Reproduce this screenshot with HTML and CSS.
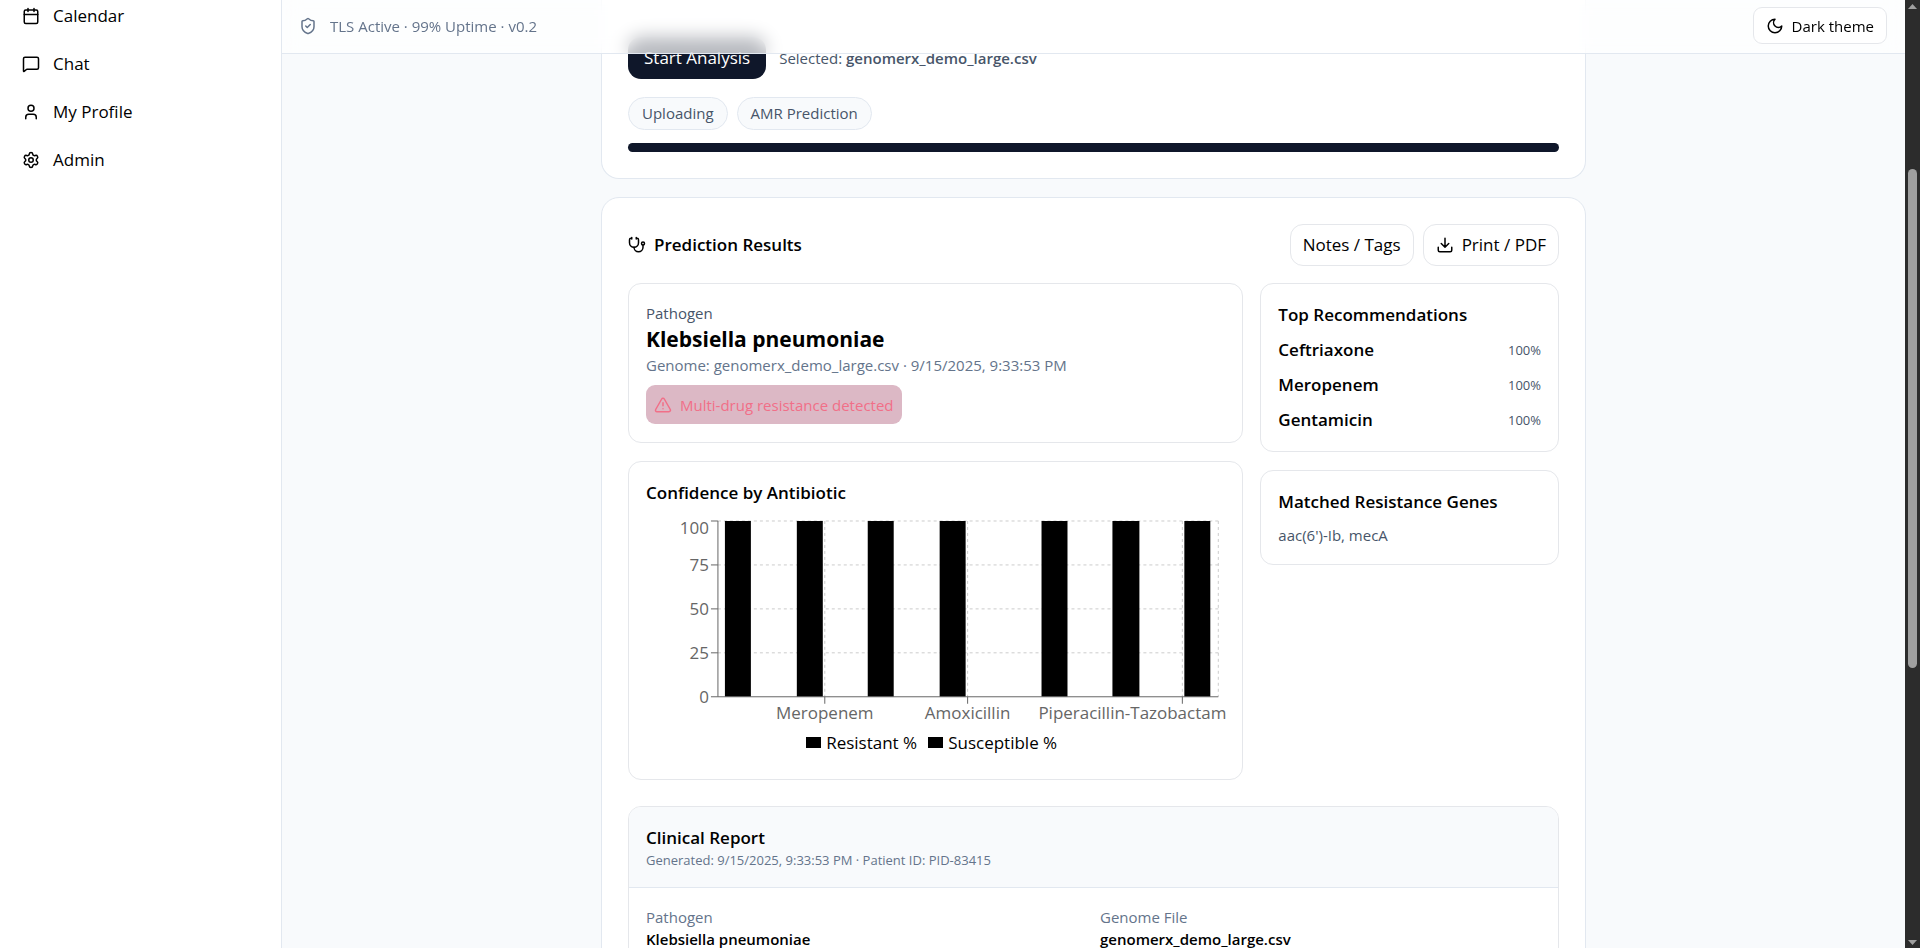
FILE: index.html
```html
<!DOCTYPE html>
<html lang="en">
<head>
<meta charset="utf-8">
<title>GenomeRx</title>
<link rel="stylesheet" href="styles.css">
</head>
<body>
<div class="app">
  <aside class="sidebar">
    <nav class="nav">
      <a class="nav-link" href="#calendar"><svg class="icon" viewBox="0 0 24 24"><path d="M8 2v4M16 2v4M3 10h18"/><rect x="3" y="4" width="18" height="18" rx="2"/></svg>Calendar</a>
      <a class="nav-link" href="#chat"><svg class="icon" viewBox="0 0 24 24"><path d="M22 17a2 2 0 0 1-2 2H6.828a2 2 0 0 0-1.414.586l-2.202 2.202A.71.71 0 0 1 2 21.286V5a2 2 0 0 1 2-2h16a2 2 0 0 1 2 2z"/></svg>Chat</a>
      <a class="nav-link" href="#profile"><svg class="icon" viewBox="0 0 24 24"><path d="M19 21v-2a4 4 0 0 0-4-4H9a4 4 0 0 0-4 4v2"/><circle cx="12" cy="7" r="4"/></svg>My Profile</a>
      <a class="nav-link" href="#admin"><svg class="icon" viewBox="0 0 24 24"><path d="M9.671 4.136a2.34 2.34 0 0 1 4.659 0 2.34 2.34 0 0 0 3.319 1.915 2.34 2.34 0 0 1 2.33 4.033 2.34 2.34 0 0 0 0 3.831 2.34 2.34 0 0 1-2.33 4.033 2.34 2.34 0 0 0-3.319 1.915 2.34 2.34 0 0 1-4.659 0 2.34 2.34 0 0 0-3.32-1.915 2.34 2.34 0 0 1-2.33-4.033 2.34 2.34 0 0 0 0-3.831A2.34 2.34 0 0 1 6.35 6.051a2.34 2.34 0 0 0 3.319-1.915"/><circle cx="12" cy="12" r="3"/></svg>Admin</a>
    </nav>
  </aside>

  <div class="main">
    <header class="topbar">
      <div class="status"><svg class="icon" viewBox="0 0 24 24"><path d="M20 13c0 5-3.500 7.500-7.660 8.950a1 1 0 0 1-.67-.01C7.500 20.500 4 18 4 13V6a1 1 0 0 1 1-1c2 0 4.500-1.200 6.240-2.720a1.170 1.170 0 0 1 1.520 0C14.510 3.810 17 5 19 5a1 1 0 0 1 1 1z"/><path d="m9 12 2 2 4-4"/></svg>TLS Active · 99% Uptime · v0.2</div>
      <button class="button button-small" type="button"><svg class="icon" viewBox="0 0 24 24"><path d="M12 3a6 6 0 0 0 9 9 9 9 0 1 1-9-9Z"/></svg>Dark theme</button>
    </header>

    <main class="content">
      <section class="card upload">
        <div class="upload-row">
          <button class="button-primary" type="button">Start Analysis</button>
          <p class="selected">Selected: <strong>genomerx_demo_large.csv</strong></p>
        </div>
        <ul class="chips">
          <li class="chip">Uploading</li>
          <li class="chip">AMR Prediction</li>
        </ul>
        <div class="progress" role="progressbar" aria-valuenow="100" aria-valuemin="0" aria-valuemax="100" aria-label="Analysis progress"></div>
      </section>

      <section class="card results">
        <div class="results-head">
          <h2 class="title"><svg class="icon" viewBox="0 0 24 24"><path d="M11 2v2M5 2v2M5 3H4a2 2 0 0 0-2 2v4a6 6 0 0 0 12 0V5a2 2 0 0 0-2-2h-1"/><path d="M8 15a6 6 0 0 0 12 0v-3"/><circle cx="20" cy="10" r="2"/></svg>Prediction Results</h2>
          <div class="actions">
            <button class="button" type="button">Notes / Tags</button>
            <button class="button" type="button"><svg class="icon" viewBox="0 0 24 24"><path d="M21 15v4a2 2 0 0 1-2 2H5a2 2 0 0 1-2-2v-4M7 10l5 5 5-5M12 15V3"/></svg>Print / PDF</button>
          </div>
        </div>

        <div class="results-grid">
          <div class="column">
            <article class="panel">
              <p class="small slate">Pathogen</p>
              <h3 class="pathogen">Klebsiella pneumoniae</h3>
              <p class="small muted">Genome: genomerx_demo_large.csv · 9/15/2025, 9:33:53 PM</p>
              <p class="alert"><svg class="icon" viewBox="0 0 24 24"><path d="m21.730 18-8-14a2 2 0 0 0-3.480 0l-8 14A2 2 0 0 0 4 21h16a2 2 0 0 0 1.730-3M12 9v4M12 17h.01"/></svg>Multi-drug resistance detected</p>
            </article>

            <article class="panel">
              <h3 class="title">Confidence by Antibiotic</h3>
              <figure class="chart">
                <svg class="plot" viewBox="0 0 580 212" role="img" aria-label="Confidence by antibiotic, percent">
                  <path class="grid" d="M72 6H573M72 50H573M72 94H573M72 138H573M179 6V182M322 6V182M537 6V182M573 6V182"/>
                  <path class="bars" d="M79 6h26v176h-26zM151 6h26v176h-26zM222 6h26v176h-26zM294 6h26v176h-26zM396 6h26v176h-26zM467 6h27v176h-27zM539 6h26v176h-26z"/>
                  <path class="axis" d="M72 6V182H573M65 6H72M65 50H72M65 94H72M65 138H72M65 182H72M179 182V189M322 182V189M537 182V189"/>
                  <g class="ticks ticks-y">
                    <text x="63" y="19">100</text>
                    <text x="63" y="56">75</text>
                    <text x="63" y="100">50</text>
                    <text x="63" y="144">25</text>
                    <text x="63" y="188">0</text>
                  </g>
                  <g class="ticks ticks-x">
                    <text x="179" y="204">Meropenem</text>
                    <text x="322" y="204">Amoxicillin</text>
                    <text x="487" y="204">Piperacillin-Tazobactam</text>
                  </g>
                </svg>
                <figcaption class="legend"><span class="key">Resistant %</span><span class="key">Susceptible %</span></figcaption>
              </figure>
            </article>
          </div>

          <div class="column">
            <article class="panel stack">
              <h3 class="title">Top Recommendations</h3>
              <div class="drug"><span>Ceftriaxone</span><span class="percent">100%</span></div>
              <div class="drug"><span>Meropenem</span><span class="percent">100%</span></div>
              <div class="drug"><span>Gentamicin</span><span class="percent">100%</span></div>
            </article>
            <article class="panel stack">
              <h3 class="title">Matched Resistance Genes</h3>
              <p class="small slate">aac(6')-Ib, mecA</p>
            </article>
          </div>
        </div>

        <article class="report">
          <header class="report-head">
            <h3 class="title">Clinical Report</h3>
            <p class="tiny muted">Generated: 9/15/2025, 9:33:53 PM · Patient ID: PID-83415</p>
          </header>
          <dl class="report-grid">
            <div class="field"><dt>Pathogen</dt><dd>Klebsiella pneumoniae</dd></div>
            <div class="field"><dt>Genome File</dt><dd>genomerx_demo_large.csv</dd></div>
          </dl>
        </article>
      </section>
    </main>
  </div>

  <div class="scrollbar" aria-hidden="true">
    <span class="arrow arrow-up"></span>
    <span class="thumb"></span>
    <span class="arrow arrow-down"></span>
  </div>
</div>
</body>
</html>
```
FILE: styles.css
```css
* { box-sizing: border-box; }

body {
  margin: 0;
  color: #000;
  background: #fff;
  font-family: "Open Sans", "Noto Sans", sans-serif;
  font-size: 17px;
  line-height: 26px;
}

h2, h3, p, ul, dl, dd, figure { margin: 0; padding: 0; }

button { font: inherit; color: inherit; cursor: pointer; }

.app {
  display: grid;
  grid-template-columns: 282px minmax(0, 1fr) 15px;
  height: 100vh;
  overflow: hidden;
}

.icon {
  flex: none;
  width: 18px;
  height: 18px;
  fill: none;
  stroke: currentColor;
  stroke-width: 2;
  stroke-linecap: round;
  stroke-linejoin: round;
}

.sidebar {
  border-right: 1px solid #e2e8f0;
  overflow: hidden;
}

.nav {
  display: flex;
  flex-direction: column;
  gap: 4px;
  margin-top: -6px;
  padding: 0 9px;
}

.nav-link {
  display: flex;
  align-items: center;
  gap: 13px;
  height: 44px;
  padding: 0 13px;
  color: inherit;
  text-decoration: none;
}

.main {
  position: relative;
  overflow: hidden;
  background: #f8fafc;
}

.topbar {
  position: absolute;
  inset: 0 0 auto;
  z-index: 1;
  display: flex;
  align-items: center;
  justify-content: space-between;
  height: 54px;
  padding: 0 18px 2px 17px;
  border-bottom: 1px solid #e2e8f0;
  background: rgba(255, 255, 255, 0.7);
  backdrop-filter: blur(9px);
}

.status {
  display: flex;
  align-items: center;
  gap: 13px;
  color: #64748b;
  font-size: 15px;
}

.button {
  display: flex;
  align-items: center;
  gap: 8px;
  height: 42px;
  padding: 0 12px;
  border: 1px solid #e5e7eb;
  border-radius: 13px;
  background: #fff;
}

.button-small {
  height: 37px;
  border-radius: 9px;
  font-size: 15px;
}

.content {
  display: flex;
  flex-direction: column;
  gap: 18px;
  max-width: 985px;
  margin: 0 auto;
}

.card {
  padding: 26px;
  border: 1px solid #e2e8f0;
  border-radius: 18px;
  background: #fff;
}

.upload {
  padding-top: 37px;
  border-top: 0;
  border-radius: 0 0 18px 18px;
}

.upload-row {
  display: flex;
  align-items: center;
  gap: 13px;
}

.button-primary {
  height: 42px;
  padding: 0 16px;
  border: 0;
  border-radius: 13px;
  background: #0f172a;
  color: #fff;
}

.selected {
  color: #475569;
  font-size: 15px;
}

.selected strong { font-weight: 600; }

.chips {
  display: flex;
  gap: 9px;
  margin: 18px 0 13px;
  list-style: none;
}

.chip {
  padding: 4px 13px;
  border: 1px solid #e2e8f0;
  border-radius: 17px;
  background: #f8fafc;
  color: #475569;
  font-size: 15px;
  line-height: 23px;
}

.progress {
  height: 9px;
  border-radius: 5px;
  background: #0f172a;
}

.results-head {
  display: flex;
  align-items: center;
  justify-content: space-between;
  margin-bottom: 17px;
}

.actions {
  display: flex;
  gap: 9px;
}

.title {
  display: flex;
  align-items: center;
  gap: 8px;
  font-size: 17px;
  font-weight: 600;
}

.results-grid {
  display: grid;
  grid-template-columns: 616fr 299fr;
  gap: 17px;
  align-items: start;
}

.column {
  display: flex;
  flex-direction: column;
  gap: 18px;
  min-width: 0;
}

.panel {
  padding: 18px 17px;
  border: 1px solid #e5e7eb;
  border-radius: 13px;
}

.stack {
  display: flex;
  flex-direction: column;
  gap: 9px;
}

.small {
  font-size: 15px;
  line-height: 22px;
}

.tiny {
  font-size: 13px;
  line-height: 18px;
}

.slate { color: #475569; }
.muted { color: #64748b; }

.pathogen {
  font-size: 21px;
  font-weight: 700;
  line-height: 30px;
}

.alert {
  display: flex;
  align-items: center;
  gap: 8px;
  width: fit-content;
  height: 39px;
  margin-top: 9px;
  padding: 0 8px;
  border-radius: 9px;
  background: #dcb8c5;
  color: #f16f88;
  font-size: 15px;
}

.chart { margin-top: 9px; }

.plot {
  display: block;
  width: 100%;
  overflow: visible;
}

.grid {
  fill: none;
  stroke: #ccc;
  stroke-dasharray: 3;
}

.bars { fill: #000; }

.axis {
  fill: none;
  stroke: #666;
}

.ticks {
  fill: #666;
  font-size: 17px;
}

.ticks-y { text-anchor: end; }
.ticks-x { text-anchor: middle; }

.legend {
  display: flex;
  justify-content: center;
  gap: 11px;
  height: 34px;
  padding-right: 8px;
}

.key {
  display: flex;
  align-items: center;
  gap: 5px;
  height: 32px;
}

.key::before {
  content: "";
  width: 15px;
  height: 11px;
  background: #000;
}

.drug {
  display: flex;
  align-items: center;
  justify-content: space-between;
  font-weight: 600;
}

.percent {
  color: #475569;
  font-size: 13px;
  font-weight: 400;
}

.report {
  margin-top: 26px;
  border: 1px solid #e5e7eb;
  border-radius: 13px;
  overflow: hidden;
}

.report-head {
  padding: 18px 17px;
  border-bottom: 1px solid #e2e8f0;
  background: #f8fafc;
}

.report-grid {
  display: grid;
  grid-template-columns: 1fr 1fr;
  gap: 13px;
  padding: 18px 17px;
}

.field {
  font-size: 15px;
  line-height: 22px;
}

.field dt { color: #64748b; }
.field dd { font-weight: 600; }

.scrollbar {
  display: flex;
  flex-direction: column;
  align-items: center;
  justify-content: space-between;
  padding: 4px 0 3px;
  background: #2c2c2c;
}

.arrow {
  width: 9px;
  height: 5px;
  background: #9f9f9f;
}

.arrow-up { clip-path: polygon(50% 0, 100% 100%, 0 100%); }
.arrow-down { clip-path: polygon(0 0, 100% 0, 50% 100%); }

.thumb {
  width: 9px;
  height: 53%;
  margin-bottom: 112px;
  border-radius: 5px;
  background: #9f9f9f;
}
```
